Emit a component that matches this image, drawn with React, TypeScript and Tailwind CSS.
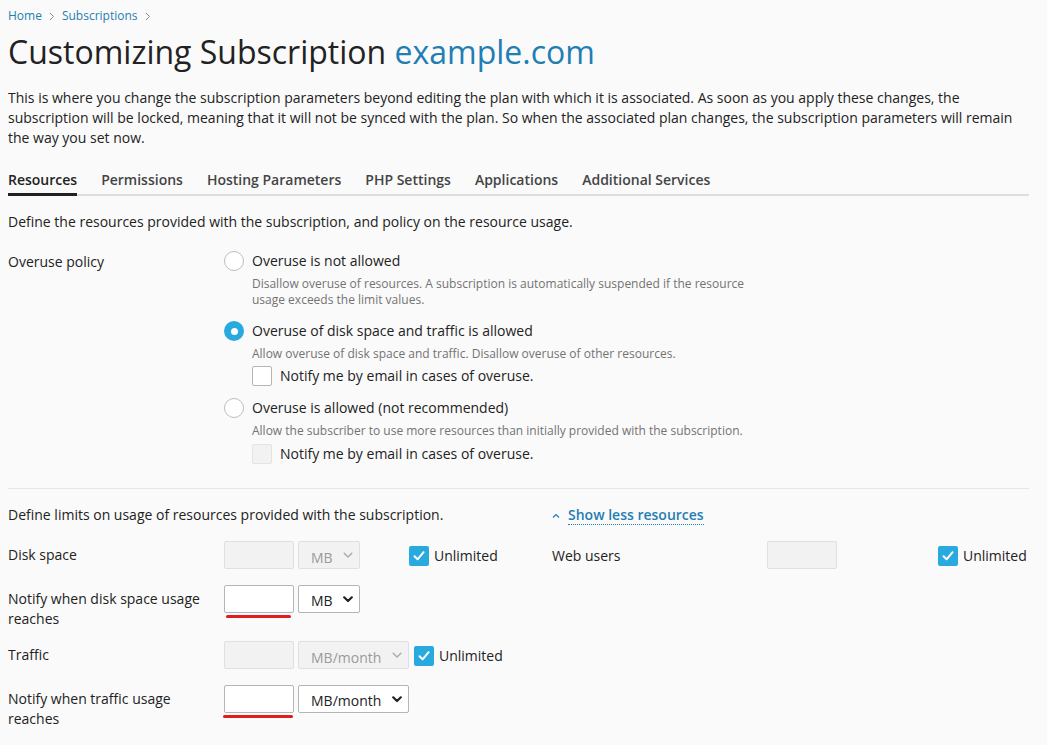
import React from "react";

const FONT = { fontFamily: '"Open Sans", "Noto Sans", sans-serif' };

function Radio({ checked }: { checked?: boolean }) {
  if (checked) {
    return (
      <span className="flex h-[20px] w-[20px] shrink-0 items-center justify-center rounded-full bg-[#28aade]">
        <span className="h-[7px] w-[7px] rounded-full bg-white" />
      </span>
    );
  }
  return <span className="block h-[20px] w-[20px] shrink-0 rounded-full border border-[#bdbdbd] bg-white" />;
}

function Check({ checked, disabled }: { checked?: boolean; disabled?: boolean }) {
  if (checked) {
    return (
      <span className="flex h-[20px] w-[20px] shrink-0 items-center justify-center rounded-[2px] bg-[#28aade]">
        <svg width="14" height="14" viewBox="0 0 14 14" fill="none">
          <path d="M2.5 7.2 L5.6 10.3 L11.6 3.2" stroke="white" strokeWidth="2" strokeLinecap="round" strokeLinejoin="round" />
        </svg>
      </span>
    );
  }
  return (
    <span
      className={
        "block h-[20px] w-[20px] shrink-0 rounded-[2px] border " +
        (disabled ? "border-[#e3e3e3] bg-[#f2f2f2]" : "border-[#b5b5b5] bg-white")
      }
    />
  );
}

function Input({ disabled, x = "w-[70px]" }: { disabled?: boolean; x?: string }) {
  return (
    <span
      className={
        "block h-[28px] shrink-0 rounded-[2px] border " +
        x +
        " " +
        (disabled ? "border-[#e0e0e0] bg-[#f2f2f2]" : "border-[#b5b5b5] bg-white")
      }
    />
  );
}

function Select({ label, disabled, w }: { label: string; disabled?: boolean; w: string }) {
  return (
    <span
      className={
        "flex h-[28px] shrink-0 items-center justify-between rounded-[2px] border pl-[12px] pr-[6px] text-[14px] " +
        w +
        " " +
        (disabled ? "border-[#e0e0e0] bg-[#f2f2f2] text-[#9a9a9a]" : "border-[#b5b5b5] bg-white text-[#222]")
      }
    >
      <span className={disabled ? "pt-[4px]" : "pt-[2px]"}>{label}</span>
      <svg width="10" height="7" viewBox="0 0 10 7" fill="none">
        <path
          d="M1.2 1.3 L5 5 L8.8 1.3"
          stroke={disabled ? "#a9a9a9" : "#222"}
          strokeWidth={disabled ? 1.4 : 2.2}
          strokeLinecap="round"
          strokeLinejoin="round"
        />
      </svg>
    </span>
  );
}

function Unlimited() {
  return (
    <span className="flex items-center gap-[5px] text-[14px] text-[#222]">
      <Check checked />
      <span>Unlimited</span>
    </span>
  );
}

function RedLine({ cls }: { cls: string }) {
  return <span className={"absolute h-[3px] rounded-full bg-[#e21b1b] " + cls} />;
}

export default function App() {
  const tabs = ["Resources", "Permissions", "Hosting Parameters", "PHP Settings", "Applications", "Additional Services"];
  return (
    <div className="min-h-screen w-[1047px] bg-[#fafafa] pl-[8px] pr-[18px] text-[#222]" style={FONT}>
      {/* breadcrumb */}
      <div className="flex items-center pt-[8px] text-[12px] leading-[16px] text-[#1f7eb3]">
        <span>Home</span>
        <span className="mx-[7px] text-[#999]">
          <svg width="6" height="9" viewBox="0 0 6 9" fill="none">
            <path d="M1 1 L4.5 4.5 L1 8" stroke="#8a8a8a" strokeWidth="1" />
          </svg>
        </span>
        <span>Subscriptions</span>
        <span className="mx-[7px]">
          <svg width="6" height="9" viewBox="0 0 6 9" fill="none">
            <path d="M1 1 L4.5 4.5 L1 8" stroke="#8a8a8a" strokeWidth="1" />
          </svg>
        </span>
      </div>

      <h1 className="mt-[8px] text-[32px] font-normal leading-[40px] text-[#222]">
        Customizing Subscription <span className="text-[#1f7eb3]">example.com</span>
      </h1>

      <p className="mt-[16px] text-[14px] leading-[20px] text-[#222]">
        This is where you change the subscription parameters beyond editing the plan with which it is associated. As soon as you apply these changes, the subscription will be locked, meaning that it will not be synced with the plan. So when the associated plan changes, the subscription parameters will remain the way you set now.
      </p>

      {/* tabs */}
      <div className="mt-[22px] flex gap-[24px] border-b-2 border-[#dedede]">
        {tabs.map((t, i) => (
          <div
            key={t}
            className={
              "-mb-[2px] pb-[3px] text-[14px] font-semibold leading-[20px] " +
              (i === 0 ? "border-b-[3px] border-[#222] text-[#222]" : "border-b-[3px] border-transparent text-[#444]")
            }
          >
            {t}
          </div>
        ))}
      </div>

      <div className="mt-[16px] text-[14px] leading-[20px]">
        Define the resources provided with the subscription, and policy on the resource usage.
      </div>

      {/* overuse policy */}
      <div className="mt-[20px] flex">
        <div className="w-[216px] shrink-0 text-[14px] leading-[20px]">Overuse policy</div>
        <div className="-mt-[1px] flex flex-col">
          <div className="flex items-center gap-[8px] text-[14px] leading-[20px]">
            <Radio />
            <span>Overuse is not allowed</span>
          </div>
          <div className="mt-[5px] w-[528px] pl-[28px] text-[12px] leading-[16px] text-[#737373]">
            Disallow overuse of resources. A subscription is automatically suspended if the resource usage exceeds the limit values.
          </div>

          <div className="mt-[13px] flex items-center gap-[8px] text-[14px] leading-[20px]">
            <Radio checked />
            <span>Overuse of disk space and traffic is allowed</span>
          </div>
          <div className="mt-[5px] pl-[28px] text-[12px] leading-[16px] text-[#737373]">
            Allow overuse of disk space and traffic. Disallow overuse of other resources.
          </div>
          <div className="mt-[4px] flex items-center gap-[8px] pl-[28px] text-[14px] leading-[20px]">
            <Check />
            <span>Notify me by email in cases of overuse.</span>
          </div>

          <div className="mt-[12px] flex items-center gap-[8px] text-[14px] leading-[20px]">
            <Radio />
            <span>Overuse is allowed (not recommended)</span>
          </div>
          <div className="mt-[5px] pl-[28px] text-[12px] leading-[16px] text-[#737373]">
            Allow the subscriber to use more resources than initially provided with the subscription.
          </div>
          <div className="mt-[5px] flex items-center gap-[8px] pl-[28px] text-[14px] leading-[20px]">
            <Check disabled />
            <span>Notify me by email in cases of overuse.</span>
          </div>
        </div>
      </div>

      <div className="mt-[24px] h-px bg-[#e6e6e6]" />

      {/* limits */}
      <div className="flex">
        <div className="w-[544px] shrink-0">
          <div className="mt-[16px] text-[14px] leading-[20px]">Define limits on usage of resources provided with the subscription.</div>

          <div className="mt-[16px] flex items-start">
            <div className="w-[216px] shrink-0 pt-[4px] text-[14px] leading-[20px]">Disk space</div>
            <Input disabled />
            <span className="ml-[4px]">
              <Select label="MB" disabled w="w-[62px]" />
            </span>
            <span className="ml-[49px] pt-[4px]">
              <Unlimited />
            </span>
          </div>

          <div className="mt-[16px] flex items-start">
            <div className="w-[216px] shrink-0 pr-[10px] pt-[4px] text-[14px] leading-[20px]">
              Notify when disk space usage reaches
            </div>
            <span className="relative">
              <Input />
              <RedLine cls="left-[2px] top-[30px] w-[65px]" />
            </span>
            <span className="ml-[4px]">
              <Select label="MB" w="w-[62px]" />
            </span>
          </div>

          <div className="mt-[12px] flex items-start">
            <div className="w-[216px] shrink-0 pt-[4px] text-[14px] leading-[20px]">Traffic</div>
            <Input disabled />
            <span className="ml-[4px]">
              <Select label="MB/month" disabled w="w-[111px]" />
            </span>
            <span className="ml-[5px] pt-[4px]">
              <Unlimited />
            </span>
          </div>

          <div className="mt-[16px] flex items-start">
            <div className="w-[216px] shrink-0 pr-[10px] pt-[4px] text-[14px] leading-[20px]">
              Notify when traffic usage reaches
            </div>
            <span className="relative">
              <Input />
              <RedLine cls="-left-[1px] top-[30px] w-[70px]" />
            </span>
            <span className="ml-[4px]">
              <Select label="MB/month" w="w-[111px]" />
            </span>
          </div>
        </div>

        <div className="flex-1">
          <div className="mt-[17px] flex items-center text-[14px] leading-[20px]">
            <svg width="8" height="6" viewBox="0 0 8 6" fill="none" className="mr-[8px]">
              <path d="M1 4.5 L4 1.5 L7 4.5" stroke="#1f7eb3" strokeWidth="1.2" />
            </svg>
            <span className="border-b border-dotted border-[#1f7eb3] font-semibold leading-[18px] text-[#1f7eb3]">
              Show less resources
            </span>
          </div>
          <div className="mt-[16px] flex items-start">
            <div className="w-[215px] shrink-0 pt-[5px] text-[14px] leading-[20px]">Web users</div>
            <Input disabled />
            <span className="ml-[101px] pt-[4px]">
              <Unlimited />
            </span>
          </div>
        </div>
      </div>
    </div>
  );
}
